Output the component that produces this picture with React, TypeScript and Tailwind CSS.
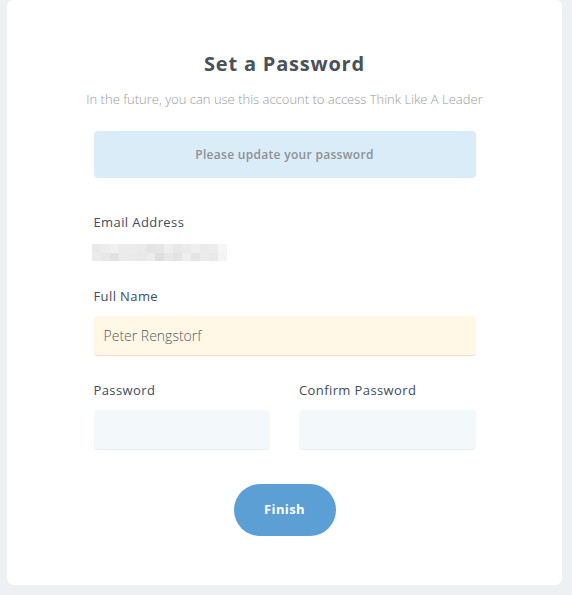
import React from "react";

/* blurred email, drawn as a pixel mosaic */
const MOSAIC = [
  ["#e9e9e9", "#ededed", "#f0f0f0", "#ebebeb", "#ececec", "#eaeaea", "#e4e4e4", "#e6e6e6", "#eeeeee", "#e8e8e8", "#ebebeb", "#efefef", "#eaeaea", "#ececec", "#f6f6f6"],
  ["#ebebeb", "#e7e7e7", "#e2e2e2", "#ebebeb", "#eaeaea", "#e9e9e9", "#ececec", "#dedede", "#e7e7e7", "#e3e3e3", "#eeeeee", "#e5e5e5", "#ebebeb", "#e9e9e9", "#f4f4f4"],
];

function Field({
  label,
  value,
  tone = "blue",
}: {
  label: string;
  value?: string;
  tone?: "blue" | "yellow";
}) {
  return (
    <div className="flex flex-col">
      <label className="text-[13px] leading-[18px] tracking-[0.4px] text-[#414c5b]">
        {label}
      </label>
      <div
        className={
          tone === "yellow"
            ? "mt-[11px] h-10 rounded-[4px] bg-[#fff8e7] border-b border-[#fcd9c4] px-[10px] flex items-center text-[14px] font-light text-[#54595d]"
            : "mt-[11px] h-10 rounded-[4px] bg-[#f3f8fb] border-b border-[#e9eef2] px-[10px] flex items-center text-[14px] font-light text-[#54595d]"
        }
      >
        {value}
      </div>
    </div>
  );
}

export default function App() {
  return (
    <div className="min-h-screen bg-[#eef1f3] pl-[7px] pr-[10px] font-['Open_Sans',sans-serif]">
      <div className="w-[555px] h-[585px] bg-white rounded-b-[7px] rounded-t-[6px] pt-[50px] flex flex-col items-center">
        <h1 className="text-[20px] leading-[28px] font-bold tracking-[0.8px] text-[#4a5158]">
          Set a Password
        </h1>
        <p className="mt-[13px] text-[13px] leading-[16px] font-light text-[#999b9c]">
          In the future, you can use this account to access Think Like A Leader
        </p>

        <div className="w-[382px] mt-[24px]">
          <div className="h-[47px] rounded-[4px] bg-[#d9ecf7] flex items-center justify-center text-[12px] font-semibold tracking-[0.3px] text-[#8e9193]">
            Please update your password
          </div>

          <div className="mt-[35px]">
            <label className="block text-[13px] leading-[18px] tracking-[0.4px] text-[#414c5b]">
              Email Address
            </label>
            <div className="mt-[13px] -ml-[2px] flex flex-col w-fit">
              {MOSAIC.map((row, r) => (
                <div key={r} className="flex">
                  {row.map((c, i) => (
                    <div
                      key={i}
                      className="w-[9px] h-[8.5px]"
                      style={{ backgroundColor: c }}
                    />
                  ))}
                </div>
              ))}
            </div>
          </div>

          <div className="mt-[26px]">
            <Field label="Full Name" value="Peter Rengstorf" tone="yellow" />
          </div>

          <div className="mt-[25px] grid grid-cols-2 gap-[29px]">
            <Field label="Password" />
            <Field label="Confirm Password" />
          </div>
        </div>

        <button className="mt-[34px] w-[102px] h-[52px] rounded-full bg-[#5b9fd5] text-white text-[13px] font-bold tracking-[0.4px]">
          Finish
        </button>
      </div>
    </div>
  );
}
